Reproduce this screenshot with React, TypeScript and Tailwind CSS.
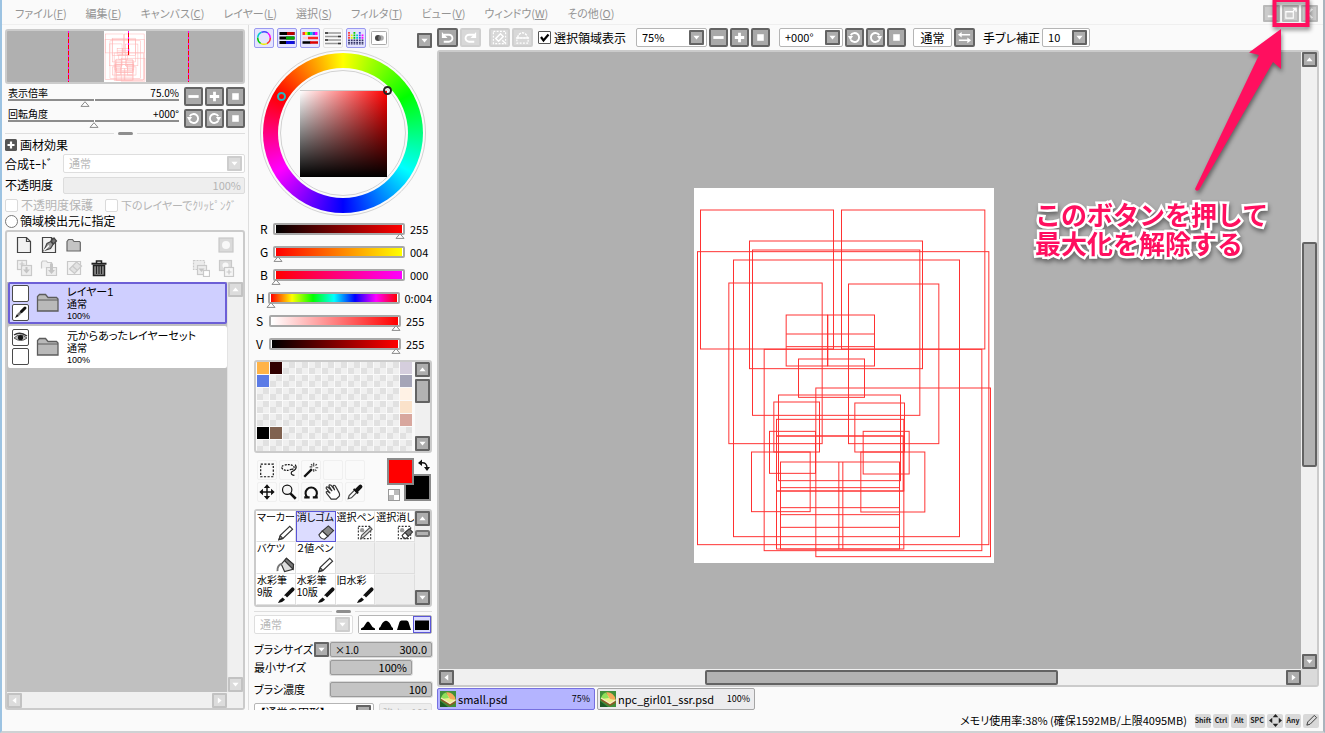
import React, { useState } from "react";
import type { ReactNode } from "react";

type Dir = "up" | "down" | "left" | "right";

const arrowPoints: Record<Dir, string> = {
  up: "3.5,10.5 8,5 12.5,10.5",
  down: "3.5,5.5 8,11 12.5,5.5",
  left: "10.5,3.5 5,8 10.5,12.5",
  right: "5.5,3.5 11,8 5.5,12.5",
};

function Arrow({ dir }: { dir: Dir }) {
  return (
    <svg viewBox="0 0 16 16" className="size-full" aria-hidden="true">
      <polygon points={arrowPoints[dir]} fill="#fff" />
    </svg>
  );
}

function ArrowButton({ dir, label, faded }: { dir: Dir; label: string; faded?: boolean }) {
  return (
    <button
      type="button"
      aria-label={label}
      className={
        faded
          ? "size-[15px] shrink-0 rounded-[1px] border-2 border-[#c2c2c2] bg-[#dcdcdc]"
          : "size-[15px] shrink-0 rounded-[1px] border-2 border-[#636363] bg-[#adadad]"
      }
    >
      <Arrow dir={dir} />
    </button>
  );
}

function Glyph({ name }: { name: string }) {
  return (
    <svg viewBox="0 0 16 16" className="size-[15px]" fill="none" stroke="#fff" strokeWidth="2" aria-hidden="true">
      {name === "minus" && <path d="M2.500 8h11" strokeWidth="3" />}
      {name === "plus" && <path d="M3 8h10M8 3v10" strokeWidth="3" />}
      {name === "square" && <rect x="4.500" y="4.500" width="7" height="7" fill="#fff" stroke="none" />}
      {name === "ccw" && (
        <>
          <path d="M4 10.500a4.800 4.800 0 1 0 0-5" />
          <path d="M1 6.500h5.500L3.500 11z" fill="#fff" stroke="none" />
        </>
      )}
      {name === "cw" && (
        <>
          <path d="M12 10.500a4.800 4.800 0 1 1 0-5" />
          <path d="M15 6.500H9.500l3 4.500z" fill="#fff" stroke="none" />
        </>
      )}
      {name === "undo" && (
        <>
          <path d="M4 5h5.500a3.500 3.500 0 0 1 0 7.500H4" />
          <path d="M2 2v6.500h6z" fill="#fff" stroke="none" />
        </>
      )}
      {name === "redo" && (
        <>
          <path d="M12 5H6.500a3.500 3.500 0 0 0 0 7.500H12" />
          <path d="M14 2v6.500H8z" fill="#fff" stroke="none" />
        </>
      )}
      {name === "deselect" && (
        <>
          <rect x="1.500" y="1.500" width="13" height="13" strokeDasharray="2 1.500" strokeWidth="1.200" />
          <path d="M4 9l5-5 3 3-5 5z" strokeWidth="1.500" />
          <path d="M11 11l3 3" strokeWidth="1.500" />
        </>
      )}
      {name === "invert" && (
        <>
          <path d="M2 8.500h12V14H2z" strokeWidth="1.200" strokeDasharray="2 1.500" />
          <path d="M3 8a5 5 0 0 1 10 0" strokeWidth="1.500" strokeDasharray="2.500 1" />
          <path d="M1 8.500h14" strokeWidth="1.500" />
        </>
      )}
      {name === "swap" && (
        <>
          <path d="M3 5h11M2 11h11" strokeWidth="1.600" />
          <path d="M1 5l4-3v6zM15 11l-4-3v6z" fill="#fff" stroke="none" />
        </>
      )}
    </svg>
  );
}

function ToolButton({ name, label, faded, wide }: { name: string; label: string; faded?: boolean; wide?: boolean }) {
  return (
    <button
      type="button"
      aria-label={label}
      className={`flex h-[19px] shrink-0 items-center justify-center rounded-[2px] border-2 ${wide ? "w-[21px]" : "w-[19px]"} ${
        faded ? "border-[#cfcfcf] bg-[#d8d8d8]" : "border-[#646464] bg-[#a9a9a9]"
      }`}
    >
      <Glyph name={name} />
    </button>
  );
}

function DropDown({ label, value, width, faded }: { label: string; value: string; width: string; faded?: boolean }) {
  return (
    <span
      className={`relative flex h-[19px] items-center rounded-[2px] border bg-white pr-[2px] ${width} ${
        faded ? "border-[#dedede]" : "border-[#b5b5b5]"
      }`}
    >
      <select
        aria-label={label}
        defaultValue={value}
        disabled={faded}
        className={`h-full min-w-0 flex-1 appearance-none bg-transparent pl-[5px] text-[11px] leading-[17px] opacity-100 outline-none ${
          faded ? "text-[#b8b8b8]" : "text-black"
        }`}
      >
        <option>{value}</option>
      </select>
      <span
        className={`pointer-events-none size-[15px] shrink-0 rounded-[1px] border-2 ${
          faded ? "border-[#cdcdcd] bg-[#dcdcdc]" : "border-[#636363] bg-[#adadad]"
        }`}
      >
        <Arrow dir="down" />
      </span>
    </span>
  );
}

function Grip() {
  return (
    <div className="flex h-2 shrink-0 items-center gap-1">
      <span className="h-px flex-1 bg-[#dedede]" />
      <span className="h-[3px] w-[15px] rounded bg-[#8e8e8e]" />
      <span className="h-px flex-1 bg-[#dedede]" />
    </div>
  );
}

function Triangle({ at }: { at: number }) {
  return (
    <span className="pointer-events-none absolute top-full -ml-[5px] block h-[6px] w-[10px]" style={{ left: `${at}%` }}>
      <svg viewBox="0 0 10 6" className="block size-full" aria-hidden="true">
        <path d="M5 .7L9 5.400H1z" fill="#fff" stroke="#8a8a8a" />
      </svg>
    </span>
  );
}

const menus: [string, string][] = [
  ["ファイル", "F"],
  ["編集", "E"],
  ["キャンバス", "C"],
  ["レイヤー", "L"],
  ["選択", "S"],
  ["フィルタ", "T"],
  ["ビュー", "V"],
  ["ウィンドウ", "W"],
  ["その他", "O"],
];

function WindowButton({ label, children }: { label: string; children: ReactNode }) {
  return (
    <button type="button" aria-label={label} className="size-[17px] rounded-[1px] border-2 border-[#b9b9b9] bg-[#cbcbcb]">
      <svg viewBox="0 0 14 14" className="size-full" fill="none" stroke="#fff" strokeWidth="2" aria-hidden="true">
        {children}
      </svg>
    </button>
  );
}

function Header() {
  return (
    <header className="flex h-[25px] shrink-0 items-center border-b border-[#efefef] pt-[2px] pr-[5px] pl-[13px]">
      <nav className="flex flex-1 gap-[19px] text-[11px] text-[#949494]">
        {menus.map(([name, key]) => (
          <button type="button" key={name} className="whitespace-nowrap">
            {name}(<span className="underline">{key}</span>)
          </button>
        ))}
      </nav>
      <div className="flex gap-[2px]">
        <WindowButton label="最小化">
          <path d="M3 10h6" />
        </WindowButton>
        <WindowButton label="元に戻す">
          <path d="M2 5h8v7H2z" strokeWidth="1.200" />
          <path d="M2 5h8M10 4l3-3M9.500 1.500H13V5" strokeWidth="1.500" />
        </WindowButton>
        <WindowButton label="閉じる">
          <path d="M10 2L5 7l5 5" />
        </WindowButton>
      </div>
    </header>
  );
}

/* Guide boxes of the open drawing: x1, y1, x2, y2 on a 930 x 1155 sheet. */
const boxes: number[][] = [
  [31, 75, 430, 492], [454, 75, 884, 492], [22, 200, 896, 1079], [178, 168, 697, 551],
  [187, 195, 689, 691], [130, 225, 808, 1055], [116, 294, 396, 776], [475, 297, 746, 776],
  [288, 390, 412, 543], [413, 390, 553, 543], [325, 522, 523, 637], [222, 493, 875, 1097],
  [377, 609, 901, 1115], [265, 630, 631, 887], [251, 651, 388, 801], [494, 654, 643, 801],
  [259, 703, 641, 918], [259, 753, 639, 918], [259, 753, 641, 1092], [238, 739, 376, 865],
  [519, 739, 657, 867], [184, 801, 360, 980], [512, 801, 704, 981], [271, 831, 628, 1092],
];
const rules = "M288 447H553M288 485H553M446 831V1092M458 831V1092M271 908H628M271 968H628M271 989H628M271 1027H628";

function Drawing({ stroke }: { stroke: string }) {
  return (
    <svg viewBox="11.5 9 900 1125" className="block size-full" fill="none" stroke="#ff0000" aria-hidden="true">
      <g className={stroke}>
        {boxes.map(([x1, y1, x2, y2], i) => (
          <rect key={i} x={x1} y={y1} width={x2 - x1} height={y2 - y1} />
        ))}
        <path d={rules} />
      </g>
    </svg>
  );
}

function NavSlider({ label, value, at }: { label: string; value: string; at: number }) {
  return (
    <label className="block h-[21px]">
      <span className="flex h-[12px] items-center justify-between text-[10px] leading-[12px]">
        <span>{label}</span>
        <span>{value}</span>
      </span>
      <span className="relative block h-[2px] bg-[#8d8d8d]">
        <span className="absolute left-1/2 h-[2px] w-px bg-white" />
        <Triangle at={at} />
        <input type="range" defaultValue={at} aria-label={label} className="absolute inset-0 h-[8px] w-full opacity-0" />
      </span>
    </label>
  );
}

function LayerIcon({ name }: { name: string }) {
  const faded = name.startsWith("f-");
  return (
    <svg viewBox="0 0 18 18" className="size-[18px]" fill="none" stroke={faded ? "#c9c9c9" : "#444"} strokeWidth="1.200" aria-hidden="true">
      {(name === "new" || name === "vector") && (
        <path d="M2.500 1.500h9l4 4v11h-13zM11.500 1.500v4h4" fill="#f2f2f2" />
      )}
      {name === "vector" && (
        <>
          <path d="M4 14.500l3-7 4-2 2 3-2.500 4z" fill="#9a9a9a" />
          <path d="M11 5l3-3 2.500 3-3 3z" fill="#777" />
          <path d="M4 14.500l5-5" stroke="#fff" />
        </>
      )}
      {name === "folder" && <path d="M2 5.500l1.500-2h4l1.500 2h5.500l.8 1V15H2z" fill="#c4c4c4" stroke="#666" />}
      {name === "trash" && (
        <>
          <path d="M3.500 6.500h11v10h-11z" fill="#8c8c8c" stroke="#222" strokeWidth="1.500" />
          <path d="M1.500 4.700h15" stroke="#222" strokeWidth="2" />
          <path d="M6.500 4V2h5v2" stroke="#222" strokeWidth="1.500" />
          <path d="M6.500 7v8M9 7v8M11.500 7v8" stroke="#222" />
        </>
      )}
      {name === "f-down" && (
        <>
          <rect x="2.500" y="1.500" width="9" height="9" fill="#f1f1f1" />
          <rect x="6.500" y="6.500" width="10" height="10" fill="#ededed" />
          <path d="M4.500 5h5M7 2.500v5" />
          <path d="M8 10.500h7l-3.500 4zM10.500 8h2v3h-2z" fill="#c4c4c4" stroke="none" />
        </>
      )}
      {name === "f-merge" && (
        <>
          <path d="M1.500 9.500v-6l1-1.500h4l1 1.500h4v5" fill="#f1f1f1" />
          <path d="M6.500 8.500h10v8h-10z" fill="#ededed" />
          <path d="M8 11h7l-3.500 4zM10 4.500h3V11h-3z" fill="#c4c4c4" stroke="none" />
        </>
      )}
      {name === "f-clear" && (
        <>
          <path d="M2.500 2.500h13v13h-13z" fill="#f3f3f3" />
          <path d="M4.500 10l7-7 5 4-7 7.500z" fill="#e2e2e2" />
          <path d="M7.500 7l5 4.500" />
        </>
      )}
      {name === "f-mask" && (
        <>
          <rect x="2" y="2" width="14" height="14" fill="#dadada" />
          <circle cx="9" cy="9" r="4" fill="#f8f8f8" stroke="none" />
        </>
      )}
      {name === "f-apply" && (
        <>
          <rect x="1.500" y="1.500" width="11" height="9" strokeDasharray="2 1" fill="#ececec" />
          <rect x="5.500" y="6.500" width="9" height="9" fill="#ececec" />
          <path d="M6.500 9.500h6l-3 3.500z" fill="#c4c4c4" stroke="none" />
          <rect x="11.500" y="11.500" width="6" height="6" fill="#fff" />
        </>
      )}
      {name === "f-newmask" && (
        <>
          <rect x="2.500" y="1.500" width="12" height="10" fill="#dcdcdc" />
          <circle cx="8.500" cy="6.500" r="3" fill="#f8f8f8" stroke="none" />
          <rect x="7.500" y="8.500" width="9" height="9" fill="#f6f6f6" />
          <path d="M12 10.500v5M9.500 13h5" />
        </>
      )}
    </svg>
  );
}

function LayerRow({ name, selected, eye, pen }: { name: string; selected?: boolean; eye?: boolean; pen?: boolean }) {
  return (
    <li
      className={`flex h-[42px] items-center rounded-[2px] border-2 pl-[2px] ${
        selected ? "border-[#6c5fd6] bg-[#cfcfff]" : "border-white bg-white"
      }`}
    >
      <span className="flex flex-col gap-[2px]">
        <button type="button" aria-label={`${name} 表示`} className="size-[17px] rounded-[2px] border border-[#4a4a4a] bg-white">
          {eye && (
            <svg viewBox="0 0 15 15" className="size-full" aria-hidden="true">
              <path d="M1 8q6-6 13 0q-6 5-13 0z" fill="#bbb" stroke="#555" />
              <circle cx="7.500" cy="7.500" r="2.600" fill="#111" />
              <path d="M1 5q6-4 13 1" stroke="#333" strokeWidth="1.500" fill="none" />
            </svg>
          )}
        </button>
        <button type="button" aria-label={`${name} 編集`} className="size-[17px] rounded-[2px] border border-[#4a4a4a] bg-white">
          {pen && (
            <svg viewBox="0 0 15 15" className="size-full" aria-hidden="true">
              <path d="M2 13l2-4 2 2z" fill="#111" />
              <path d="M5 10l3-3" stroke="#777" strokeWidth="2.500" />
              <path d="M8.500 6.500L12 3" stroke="#111" strokeWidth="3" strokeLinecap="round" />
            </svg>
          )}
        </button>
      </span>
      <svg viewBox="0 0 24 20" className="mx-[7px] h-5 w-6 shrink-0" aria-hidden="true">
        <path d="M1.500 18V3.500l2-2h6l2.500 3h8.500l1.500 1.500V18z" fill="#b9b9b9" stroke="#5c5c5c" strokeWidth="1.300" />
        <path d="M2 7h20" stroke="#5c5c5c" />
      </svg>
      <span className="flex flex-col pt-[2px] font-['Liberation_Sans','Noto_Sans_CJK_JP',sans-serif] whitespace-nowrap">
        <span className="text-[11px] leading-[13px]">{name}</span>
        <span className="text-[10px] leading-[12px]">通常</span>
        <span className="text-[9px] leading-[11px]">100%</span>
      </span>
    </li>
  );
}

function GuideLine({ place }: { place: string }) {
  return <span className={`w-px bg-[repeating-linear-gradient(#ff00ff_0_2px,#ff0000_2px_6px)] ${place}`} />;
}

function LeftPanel() {
  return (
    <aside className="flex w-[247px] shrink-0 flex-col border-r border-[#dedede] px-[3px] pt-1">
      <div className="flex h-[55px] shrink-0 items-stretch justify-center rounded-[3px] border-2 border-[#cbcbcb] bg-[#b0b0b0]">
        <div className="flex flex-1 justify-end">
          <GuideLine place="mr-[35px]" />
        </div>
        <div className="relative w-[42px] bg-white">
          <div className="h-full opacity-30">
            <Drawing stroke="[stroke-width:11]" />
          </div>
          <GuideLine place="absolute top-0 left-6 h-6" />
        </div>
        <div className="flex flex-1 justify-start">
          <GuideLine place="ml-[42px]" />
        </div>
      </div>

      <div className="flex gap-[5px] pt-[3px] pl-[3px]">
        <div className="flex-1">
          <NavSlider label="表示倍率" value="75.0%" at={45} />
          <NavSlider label="回転角度" value="+000°" at={50} />
        </div>
        <div className="grid grid-cols-3 gap-[2px]">
          <ToolButton name="minus" label="縮小" />
          <ToolButton name="plus" label="拡大" />
          <ToolButton name="square" label="表示倍率をリセット" />
          <ToolButton name="ccw" label="左回転" />
          <ToolButton name="cw" label="右回転" />
          <ToolButton name="square" label="回転角度をリセット" />
        </div>
      </div>
      <Grip />

      <div className="flex flex-col gap-[2px] text-[12px] leading-4">
        <button type="button" className="flex h-[15px] items-center gap-[3px]">
          <svg viewBox="0 0 12 12" className="size-3" aria-hidden="true">
            <rect width="12" height="12" rx="1.500" fill="#555" />
            <path d="M2.500 6h7M6 2.500v7" stroke="#fff" strokeWidth="2.200" />
          </svg>
          画材効果
        </button>
        <div className="flex h-[19px] items-center">
          <span className="w-[58px]">合成ﾓｰﾄﾞ</span>
          <DropDown label="合成モード" value="通常" width="flex-1" faded />
        </div>
        <label className="flex h-[20px] items-center">
          <span className="w-[58px]">不透明度</span>
          <input
            readOnly
            value="100%"
            className="h-[17px] min-w-0 flex-1 rounded-[2px] border border-[#dcdcdc] bg-[#eeeeee] pr-[3px] text-right text-[11px] text-[#b5b5b5]"
          />
        </label>
        <div className="flex h-[16px] items-center gap-3 whitespace-nowrap text-[#b5b5b5]">
          <label className="flex items-center gap-[3px]">
            <input type="checkbox" disabled className="size-[13px] appearance-none rounded-[2px] border border-[#dadada] bg-white" />
            不透明度保護
          </label>
          <label className="flex items-center gap-[3px] text-[11px]">
            <input type="checkbox" disabled className="size-[13px] appearance-none rounded-[2px] border border-[#dadada] bg-white" />
            下のレイヤーでｸﾘｯﾋﾟﾝｸﾞ
          </label>
        </div>
        <label className="-mt-[2px] flex h-[16px] items-center gap-[2px]">
          <input type="radio" className="size-[13px] appearance-none rounded-full border border-[#777] bg-white" />
          領域検出元に指定
        </label>
      </div>

      <section aria-label="レイヤー" className="mt-[1px] flex min-h-0 flex-1 flex-col rounded-[3px] border-2 border-[#cbcbcb]">
        <div className="flex flex-col gap-[5px] px-[8px] pt-[4px] pb-[5px]">
          <div className="flex gap-[7px]">
            {[["new", "新規レイヤー"], ["vector", "新規ペン入れレイヤー"], ["folder", "新規レイヤーセット"]].map(([n, l]) => (
              <button type="button" key={n} aria-label={l}><LayerIcon name={n} /></button>
            ))}
            <button type="button" aria-label="レイヤーマスク" className="ml-auto"><LayerIcon name="f-mask" /></button>
          </div>
          <div className="flex gap-[7px]">
            {[["f-down", "下のレイヤーに転写"], ["f-merge", "下のレイヤーと結合"], ["f-clear", "レイヤーをクリア"], ["trash", "レイヤーの削除"]].map(([n, l]) => (
              <button type="button" key={n} aria-label={l}><LayerIcon name={n} /></button>
            ))}
            <button type="button" aria-label="マスクを適用" className="ml-auto"><LayerIcon name="f-apply" /></button>
            <button type="button" aria-label="マスクを作成"><LayerIcon name="f-newmask" /></button>
          </div>
        </div>
        <div className="flex min-h-0 flex-1 bg-[#c0c0c0] pl-px">
          <ul className="flex flex-1 flex-col gap-[2px]">
            <LayerRow name="レイヤー1" selected pen />
            <LayerRow name="元からあったレイヤーセット" eye />
          </ul>
          <div className="flex w-[16px] flex-col items-end justify-between border-l border-[#e3e3e3] bg-[#f0f0f0]">
            <ArrowButton dir="up" label="上へスクロール" faded />
            <ArrowButton dir="down" label="下へスクロール" faded />
          </div>
        </div>
        <div className="flex h-[16px] items-center justify-between bg-[#f0f0f0] pr-[16px]">
          <ArrowButton dir="left" label="左へスクロール" faded />
          <ArrowButton dir="right" label="右へスクロール" faded />
        </div>
      </section>
    </aside>
  );
}

function ModeIcon({ name }: { name: string }) {
  const hues = ["#f33", "#ee0", "#0c0", "#0cc", "#44f", "#f0f"];
  return (
    <svg viewBox="0 0 18 18" className="size-full" fill="none" aria-hidden="true">
      {name === "wheel" &&
        hues.map((c, i) => (
          <circle key={c} cx="9" cy="9" r="6.300" stroke={c} strokeWidth="1.500" strokeDasharray="6.600 33" strokeDashoffset={-i * 6.600} />
        ))}
      {name === "rgb" && (
        <>
          <path d="M1.500 4.500h15M1.500 9h15M1.500 13.500h15" stroke="#000" strokeWidth="3" />
          <path d="M9 4.500h7.500" stroke="#b00" strokeWidth="3" />
          <path d="M8 9h8.500" stroke="#0a0" strokeWidth="3" />
          <path d="M8 13.500h8.500" stroke="#11d" strokeWidth="3" />
        </>
      )}
      {name === "hsv" && (
        <>
          {hues.map((c, i) => (
            <rect key={c} x={1.500 + i * 2.500} y="3" width="2.500" height="3" fill={c} />
          ))}
          <path d="M2 9h5" stroke="#fcc" strokeWidth="2.500" />
          <path d="M7 9h10" stroke="#f22" strokeWidth="2.500" />
          <path d="M1.500 13.500h8" stroke="#000" strokeWidth="2.500" />
          <path d="M9 13.500h8" stroke="#d00" strokeWidth="2.500" />
        </>
      )}
      {name === "mixer" && (
        <>
          <path d="M1 4h16M1 7.500h16M1 11h16M1 14.500h16" stroke="#999" strokeWidth="1.500" />
          <path d="M1 4h3M1 11h3M14 7.500h3M14 14.500h3" stroke="#333" strokeWidth="1.500" />
        </>
      )}
      {name === "swatch" &&
        hues.map((c, i) => (
          <g key={c} stroke={c} strokeWidth="1.800" strokeDasharray="1.800 .7">
            <path d={`M${2 + i * 2.700} ${3 + (i % 2) * 2.500}V10.500`} />
            <path d={`M${2 + i * 2.700} 10.500V16`} stroke="#336" />
          </g>
        ))}
      {name === "pad" && (
        <>
          <rect x="1.500" y="2.500" width="15" height="13" rx="1" stroke="#aaa" fill="#fff" />
          <circle cx="8" cy="9" r="3" fill="#444" />
          <circle cx="11" cy="9" r="2.800" fill="#888" opacity=".7" />
        </>
      )}
    </svg>
  );
}

const modes: [string, string, boolean][] = [
  ["wheel", "カラーサークル", true],
  ["rgb", "RGBスライダ", true],
  ["hsv", "HSVスライダ", true],
  ["mixer", "中間色バー", false],
  ["swatch", "スウォッチ", true],
  ["pad", "スクラッチパッド", false],
];

function ColorSlider({ label, value, at, bar, shift }: { label: string; value: string; at: number; bar: string; shift?: boolean }) {
  return (
    <label className={`flex h-[23px] items-center ${shift ? "pl-[2px]" : "pl-[6px]"}`}>
      <span className="w-[13px] text-[12px] leading-4">{label}</span>
      <span className="relative block h-[12px] w-[132px] shrink-0 rounded-[2px] border-2 border-[#a8a8a8]">
        <span className={`block h-full border-x border-white ${bar}`} />
        <Triangle at={at} />
        <input type="range" defaultValue={at} aria-label={label} className="absolute inset-0 w-full opacity-0" />
      </span>
      <span className="pl-[5px] text-[11px] leading-4">{value}</span>
    </label>
  );
}

const swatches: Record<number, string> = {
  0: "bg-[#ffb347]",
  1: "bg-[#300000]",
  11: "bg-[#d5cedd]",
  12: "bg-[#5b7be6]",
  23: "bg-[#a5a5b7]",
  35: "bg-[#fff2e5]",
  47: "bg-[#fae2ca]",
  59: "bg-[#d8a79e]",
  60: "bg-[#000000]",
  61: "bg-[#806250]",
};

function ToolIcon({ name }: { name: string }) {
  return (
    <svg viewBox="0 0 20 20" className="size-full" fill="none" stroke="#111" strokeWidth="1.300" aria-hidden="true">
      {name === "select" && <rect x="3" y="3.500" width="14" height="14" strokeDasharray="2.400 1.600" />}
      {name === "lasso" && (
        <>
          <path d="M13 9q-6 3-10 0q-3-3 2-4.500q6-1.500 10 1q2 3-2 4" strokeDasharray="2.200 1.200" />
          <path d="M17 4q3 5-4 8q-2 3 3 4" />
        </>
      )}
      {name === "wand" && (
        <>
          <path d="M2.500 17.500L11 9" strokeWidth="2.600" />
          <path d="M13 2v4M13 9v3M8.500 6.500h3M15 7.500h3M10 3.500l1.500 1.500M16.500 3.500L15 5M16 11l-1.500-1.500" stroke="#444" />
        </>
      )}
      {name === "move" && (
        <>
          <path d="M10 4v12M4 10h12" strokeWidth="1.600" />
          <path d="M10 1.500l3.500 4h-7zM10 18.500l3.500-4h-7zM1.500 10l4-3.500v7zM18.500 10l-4-3.500v7z" fill="#111" stroke="none" />
        </>
      )}
      {name === "zoom" && (
        <>
          <circle cx="8" cy="7.500" r="5.200" fill="#f4f4f4" />
          <path d="M11.500 11.500L17.500 17.500" strokeWidth="2.800" />
        </>
      )}
      {name === "rotate" && (
        <>
          <path d="M6 16a6.300 6.300 0 1 1 8.500 0" strokeWidth="2.300" />
          <path d="M2.500 16h6M12 16h5.500" strokeWidth="2.300" />
        </>
      )}
      {name === "hand" && (
        <path
          d="M8 18L3 11.500q-1.500-2.500 1-2l3 2L2.500 6q-.5-2.500 2-1.300L9 9 5.500 3.500q.2-2.300 2.300-1L12 8 10 3.500q1-1.800 2.500-.3l3 5.300q2.500 3.500 1.500 6l-3.500 3.500z"
          fill="#fff"
          stroke="#333"
        />
      )}
      {name === "picker" && (
        <>
          <path d="M2.500 17.500l1-3.500 6-6 2.500 2.500-6 6z" fill="#fff" stroke="#444" />
          <path d="M8.500 6.500l5 5" strokeWidth="2" />
          <path d="M12 8l4-4" strokeWidth="4.500" strokeLinecap="round" />
        </>
      )}
    </svg>
  );
}

const tools: [string, string][] = [
  ["select", "選択範囲"], ["lasso", "投げ縄"], ["wand", "自動選択"], ["none1", "空き1"], ["none2", "空き2"],
  ["move", "移動"], ["zoom", "ズーム"], ["rotate", "回転"], ["hand", "ハンド"], ["picker", "スポイト"],
];

function BrushIcon({ name }: { name: string }) {
  return (
    <svg viewBox="0 0 20 18" className="absolute right-0 bottom-0 h-[17px] w-[19px]" fill="none" stroke="#333" strokeWidth="1.200" aria-hidden="true">
      {name.startsWith("sel") && (
        <>
          <rect x="3.500" y="2.500" width="13" height="13" strokeDasharray="2 1.500" />
          <circle cx="7.500" cy="6.500" r="2.300" fill="#999" stroke="none" />
        </>
      )}
      {name === "pen" && (
        <>
          <path d="M3 16.500l1.500-4.500L14.500 2.500l3 3L7 15.500z" fill="#fff" />
          <path d="M3 16.500l1.500-4 2.500 2.500z" fill="#aaa" />
        </>
      )}
      {name === "selpen" && <path d="M6 15.500l1-3.500 9-8.500 2 2L9 14z" fill="#ddd" stroke="#555" />}
      {name === "eraser" && (
        <>
          <path d="M6.500 7.500L13 2l5.500 5-6 6z" fill="#888" />
          <path d="M6.500 7.500l6 5.500-3.500 3q-4 0-6-4.500z" fill="#fff" />
        </>
      )}
      {name === "seleraser" && (
        <>
          <path d="M10.500 9L15 5l3.500 3.500-4.500 4.500z" fill="#777" />
          <path d="M10.500 9l3.500 4-2.500 2.500q-3 0-4-3.500z" fill="#fff" />
        </>
      )}
      {name === "bucket" && (
        <>
          <path d="M5.500 8.500L11 2.500l7.500 6.500-.5 5-9 2.500z" fill="#ddd" />
          <path d="M11 2.500l7.500 6.500-.5 5-9-9z" fill="#777" />
          <path d="M6 8q-5 2-4.500 8" stroke="#777" strokeWidth="2" />
        </>
      )}
      {name === "brush" && (
        <>
          <path d="M10.500 9.500L17.500 2.500" stroke="#111" strokeWidth="4" strokeLinecap="round" />
          <path d="M8.500 12l2-2" stroke="#fff" strokeWidth="3.500" />
          <path d="M2 17q1.500-4 5-6l2.500 2.500q-2.500 3-7.500 3.500z" fill="#111" stroke="none" />
        </>
      )}
    </svg>
  );
}

const brushes: [string, string, string][] = [
  ["マーカー", "", "pen"], ["消しゴム", "", "eraser"], ["選択ペン", "", "selpen"], ["選択消し", "", "seleraser"],
  ["バケツ", "", "bucket"], ["２値ペン", "", "pen"], ["", "", ""], ["", "", ""],
  ["水彩筆", "9版", "brush"], ["水彩筆", "10版", "brush"], ["旧水彩", "", "brush"], ["", "", ""],
];

const shapes = [
  "M0 12v-1.500q3-1 4.500-4.500q2.500-5 5 0q1.500 3.500 4.500 4.500V12z",
  "M0 12v-2q1.500-.5 2.500-3.500q4.500-7.500 9 0q1 3 2.500 3.500v2z",
  "M0 12L2.500 4q.5-1.500 2-1.500h5q1.500 0 2 1.500L14 12z",
  "M0 2.500h14V12H0z",
];

function MiddlePanel() {
  const [brush, setBrush] = useState(1);
  return (
    <aside className="flex w-[188px] shrink-0 flex-col overflow-hidden px-[5px] pt-[3px]">
      <div className="flex h-[20px] shrink-0 items-end">
        <div className="flex h-full flex-1 gap-[3px]">
          {modes.map(([name, label, on]) => (
            <button
              type="button"
              key={name}
              aria-label={label}
              className={`size-[20px] rounded-[2px] border ${on ? "border-[#9a9af0] bg-[#e4e4ff]" : "border-[#e4e4e4] bg-[#fafafa]"}`}
            >
              <ModeIcon name={name} />
            </button>
          ))}
        </div>
        <ArrowButton dir="down" label="カラーメニュー" />
      </div>

      <div className="mt-[2px] mb-px flex size-[166px] shrink-0 items-center justify-center self-center rounded-full border border-[#d2d2d2]">
        <div className="relative flex size-[160px] items-center justify-center rounded-full bg-[conic-gradient(#ff0,#0f0,#0ff,#00f,#f0f,#f00,#ff0)]">
          <div className="flex size-[130px] items-center justify-center rounded-full bg-[#fafafa]">
            <div className="flex size-[126px] items-center justify-center rounded-full border border-[#d2d2d2]">
              <div className="relative size-[87px] border-t border-[#ccc] bg-[linear-gradient(to_top,#000,transparent),linear-gradient(to_right,#fff,#f00)]">
                <span className="absolute -top-[5px] -right-[5px] size-[9px] rounded-full border-2 border-[#222]" />
              </div>
            </div>
          </div>
          <span className="absolute top-[39px] left-[14px] size-[9px] rounded-full border-2 border-[#2bb5bd]" />
        </div>
      </div>

      <div className="flex shrink-0 flex-col">
        <ColorSlider label="R" value="255" at={98} bar="bg-linear-to-r/srgb from-black to-[#f00]" />
        <ColorSlider label="G" value="004" at={2} bar="bg-linear-to-r/srgb from-[#f00] to-[#ff0]" />
        <ColorSlider label="B" value="000" at={1} bar="bg-linear-to-r/srgb from-[#f00] to-[#f0f]" />
        <ColorSlider label="H" value="0:004" at={1} bar="bg-[linear-gradient(to_right,#f00,#ff0,#0f0,#0ff,#00f,#f0f,#f00)]" shift />
        <ColorSlider label="S" value="255" at={98} bar="bg-linear-to-r/srgb from-white to-[#f00]" shift />
        <ColorSlider label="V" value="255" at={98} bar="bg-linear-to-r/srgb from-black to-[#f00]" shift />
      </div>

      <div className="mt-[5px] flex h-[93px] shrink-0 justify-between overflow-hidden rounded-[3px] border-2 border-[#cbcbcb]">
        <div className="grid auto-rows-[12px] grid-cols-[repeat(12,12px)] gap-px overflow-hidden pl-px">
          {Array.from({ length: 84 }, (_, i) => (
            <span
              key={i}
              className={swatches[i] ?? "bg-[conic-gradient(#e1e1e1_25%,#f0f0f0_0_50%,#e1e1e1_0_75%,#f0f0f0_0)]"}
            />
          ))}
        </div>
        <div className="flex flex-col bg-[#f0f0f0]">
          <ArrowButton dir="up" label="パレットを上へ" />
          <span className="mt-[2px] h-6 rounded-[1px] border-2 border-[#636363] bg-[#b2b2b2]" />
          <span className="flex-1" />
          <ArrowButton dir="down" label="パレットを下へ" />
        </div>
      </div>

      <div className="mt-1 flex h-[48px] shrink-0 justify-between pl-[3px]">
        <div className="grid grid-cols-[repeat(5,20px)] gap-[2px] self-center">
          {tools.map(([name, label]) => (
            <button type="button" key={name} aria-label={label} className="size-5 rounded-[2px] border border-[#f0f0f0]">
              <ToolIcon name={name} />
            </button>
          ))}
        </div>
        <div className="relative w-[45px]">
          <span className="absolute top-[17px] left-[17px] size-[27px] border-2 border-[#8a8a8a] bg-black" />
          <span className="absolute top-[1px] left-0 size-[27px] border-2 border-[#8a8a8a] bg-[#ff0000]" />
          <svg viewBox="0 0 12 12" className="absolute top-[2px] left-[31px] size-3" aria-hidden="true">
            <path d="M3 4q6-1 6 5" fill="none" stroke="#111" strokeWidth="1.500" />
            <path d="M0 4l4-3.500V7zM9 12L6 8h6z" fill="#111" />
          </svg>
          <span className="absolute top-[32px] left-px size-3 border border-[#999] bg-[conic-gradient(#bbb_25%,#fff_0_50%,#bbb_0_75%,#fff_0)]" />
        </div>
      </div>

      <div className="mt-1 flex h-[98px] shrink-0 rounded-[3px] border-2 border-[#cbcbcb] bg-[#f0f0f0]">
        <div className="grid flex-1 grid-cols-4 grid-rows-3">
          {brushes.map(([a, b, icon], i) => (
            <button
              type="button"
              key={i}
              aria-label={a || "空きスロット"}
              onClick={() => setBrush(i)}
              className={`relative flex flex-col items-start overflow-hidden border text-left font-['Liberation_Sans','Noto_Sans_CJK_JP',sans-serif] text-[10px] leading-[12px] whitespace-nowrap ${
                i === brush ? "border-[#5a55d8] bg-[#dcdcff]" : a ? "border-t-white border-r-[#e0e0e0] border-b-[#e0e0e0] border-l-white bg-white" : "border-t-[#f0f0f0] border-r-[#dedede] border-b-[#dedede] border-l-[#f0f0f0] bg-[#eeeeee]"
              }`}
            >
              <span>{a}</span>
              {b && <span>{b}</span>}
              {icon && <BrushIcon name={icon} />}
            </button>
          ))}
        </div>
        <div className="flex flex-col">
          <ArrowButton dir="up" label="ブラシを上へ" />
          <span className="mt-1 h-[7px] rounded-[2px] border-2 border-[#757575] bg-[#b2b2b2]" />
          <span className="flex-1" />
          <ArrowButton dir="down" label="ブラシを下へ" />
        </div>
      </div>

      <Grip />

      <div className="flex shrink-0 gap-[5px]">
        <DropDown label="ブラシの合成モード" value="通常" width="w-[99px]" faded />
        <div className="flex h-[19px] flex-1 rounded-[2px] border border-[#b5b5b5] bg-white">
          {shapes.map((d, i) => (
            <button
              type="button"
              key={i}
              aria-label={`ブラシ形状 ${i + 1}`}
              className={`flex flex-1 items-center justify-center border ${i === 3 ? "border-[#5a55d8] bg-[#dcdcff]" : "border-white"}`}
            >
              <svg viewBox="0 0 14 14" className="size-[14px]" aria-hidden="true">
                <path d={d} fill="#000" />
              </svg>
            </button>
          ))}
        </div>
      </div>

      <div className="mt-[6px] flex shrink-0 flex-col text-[11px]">
        <div className="flex h-[18px] items-center">
          <label htmlFor="size" className="w-[60px] whitespace-nowrap">ブラシサイズ</label>
          <span className="flex w-[15px] justify-center">
            <ArrowButton dir="down" label="サイズ一覧" />
          </span>
          <div className="ml-px flex h-[15px] min-w-0 flex-1 items-center rounded-[2px] border border-[#9a9a9a] bg-[#c4c4c4] ring-1 ring-[#dadada]">
            <button type="button" className="pl-1 text-[10px]">×1.0</button>
            <input id="size" readOnly value="300.0" className="min-w-0 flex-1 bg-transparent pr-1 text-right text-[11px] leading-[13px]" />
          </div>
        </div>
        <label className="flex h-[18px] items-center">
          <span className="w-[76px] whitespace-nowrap">最小サイズ</span>
          <input readOnly value="100%" className="h-[15px] w-[82px] rounded-[2px] border border-[#9a9a9a] bg-[#c4c4c4] pr-1 text-right text-[11px] leading-[13px] ring-1 ring-[#dadada]" />
        </label>
        <label className="mt-1 flex h-[18px] items-center">
          <span className="w-[76px] whitespace-nowrap">ブラシ濃度</span>
          <input readOnly value="100" className="h-[15px] min-w-0 flex-1 rounded-[2px] border border-[#9a9a9a] bg-[#c4c4c4] pr-1 text-right text-[11px] leading-[13px] ring-1 ring-[#dadada]" />
        </label>
        <div className="mt-[5px] flex gap-[5px]">
          <DropDown label="ブラシの形" value="【通常の円形】" width="w-[120px]" />
          <label className="flex h-[19px] flex-1 items-center justify-between rounded-[2px] border border-[#dedede] bg-[#eeeeee] px-[3px] text-[10px] text-[#b8b8b8]">
            強さ
            <input readOnly value="100" className="w-6 bg-transparent text-right" />
          </label>
        </div>
      </div>
    </aside>
  );
}

function Toolbar() {
  return (
    <div className="flex h-[25px] shrink-0 items-center gap-[2px] whitespace-nowrap">
      <ToolButton name="undo" label="元に戻す" wide />
      <ToolButton name="redo" label="やり直す" faded wide />
      <span className="w-1" />
      <ToolButton name="deselect" label="選択解除" faded wide />
      <ToolButton name="invert" label="選択反転" faded wide />
      <label className="ml-[3px] flex items-center gap-[3px] text-[12px]">
        <span className="relative flex size-[13px]">
          <input type="checkbox" defaultChecked className="peer size-[13px] appearance-none rounded-[1px] border border-[#555] bg-white" />
          <svg viewBox="0 0 13 13" className="pointer-events-none absolute inset-0 hidden size-[13px] peer-checked:block" aria-hidden="true">
            <path d="M3 6l2.500 3.500L10.500 3.500" fill="none" stroke="#000" strokeWidth="2.200" />
          </svg>
        </span>
        選択領域表示
      </label>
      <span className="w-[6px]" />
      <DropDown label="表示倍率" value="75%" width="w-[71px]" />
      <ToolButton name="minus" label="縮小" />
      <ToolButton name="plus" label="拡大" />
      <ToolButton name="square" label="等倍" />
      <span className="w-[5px]" />
      <DropDown label="回転角度" value="+000°" width="w-[64px]" />
      <ToolButton name="ccw" label="左回転" />
      <ToolButton name="cw" label="右回転" />
      <ToolButton name="square" label="回転リセット" />
      <button type="button" className="ml-[5px] h-[19px] w-[39px] rounded-[2px] border border-[#b5b5b5] bg-white text-[12px] leading-4">
        通常
      </button>
      <ToolButton name="swap" label="左右反転" wide />
      <span className="ml-[6px] text-[12px]">手ブレ補正</span>
      <DropDown label="手ブレ補正" value="10" width="w-[48px]" />
    </div>
  );
}

function FileTab({ name, zoom, active }: { name: string; zoom: string; active?: boolean }) {
  return (
    <button
      type="button"
      className={`flex h-[22px] w-[158px] items-center gap-[2px] rounded-[2px] border px-[2px] pr-1 text-[11px] ${
        active ? "border-[#7670e0] bg-[#b4b4ff]" : "border-[#a5a5a5] bg-[#ececee]"
      }`}
    >
      <svg viewBox="0 0 16 16" className="size-4" aria-hidden="true">
        <rect width="16" height="16" fill="#3f8f3a" />
        <path d="M1 9A7.500 7.500 0 0 1 15.500 9L10 13 1 7z" fill="#e9f08a" />
        <path d="M6 1.500A8 8 0 0 1 15.500 9L10 8z" fill="#f4a95a" />
        <path d="M1 8A8 8 0 0 1 6 1.500L9 7z" fill="#8fe05a" />
        <path d="M1 7l9 5.500 5.500-3.500V12l-5.500 3L1 9.500z" fill="#8a5a26" />
        <path d="M1 7l9 5.500 5.500-3.500" fill="none" stroke="#f6efc5" strokeWidth="1.200" />
        <path d="M0 10l8 6H0z" fill="#1d5a24" />
      </svg>
      <span className="flex-1 text-left">{name}</span>
      <span className="text-[9px]">{zoom}</span>
    </button>
  );
}

function Workspace() {
  return (
    <main className="flex min-w-0 flex-1 flex-col pr-[4px]">
      <Toolbar />
      <div className="flex min-h-0 flex-1 flex-col rounded-[3px] border-2 border-[#cbcbcb]">
        <div className="flex min-h-0 flex-1">
          <div className="flex min-w-0 flex-1 items-center justify-center bg-[#b0b0b0] pt-[30px] pr-[52px]">
            <div className="h-[375px] w-[300px] bg-white">
              <Drawing stroke="[stroke-width:3] opacity-80" />
            </div>
          </div>
          <div className="flex w-[16px] flex-col items-center bg-[#f0f0f0]">
            <ArrowButton dir="up" label="上へ" />
            <span className="flex-[176]" />
            <span className="w-[15px] flex-[222] rounded-[2px] border-2 border-[#636363] bg-[#b2b2b2]" />
            <span className="flex-[188]" />
            <ArrowButton dir="down" label="下へ" />
          </div>
        </div>
        <div className="flex h-[16px] shrink-0 items-center bg-[#f0f0f0]">
          <ArrowButton dir="left" label="左へ" />
          <span className="flex-[252]" />
          <span className="h-[15px] flex-[351] rounded-[2px] border-2 border-[#636363] bg-[#b2b2b2]" />
          <span className="flex-[229]" />
          <ArrowButton dir="right" label="右へ" />
          <span className="h-full w-[16px] bg-[#dadada]" />
        </div>
      </div>
      <div className="flex shrink-0 gap-[2px] pt-px">
        <FileTab name="small.psd" zoom="75%" active />
        <FileTab name="npc_girl01_ssr.psd" zoom="100%" />
      </div>
    </main>
  );
}

function StatusBar() {
  const key = "flex h-[14px] w-[16px] items-center justify-center rounded-[2px] bg-[#d9d9d9] text-[7px] leading-none font-bold text-[#222]";
  return (
    <footer className="flex h-[21px] shrink-0 items-center justify-end gap-2 pr-[4px] text-[11px]">
      <span className="whitespace-nowrap">メモリ使用率:38% (確保1592MB/上限4095MB)</span>
      <div className="flex gap-[2px]">
        <span className={key}>Shift</span>
        <span className={key}>Ctrl</span>
        <span className={key}>Alt</span>
        <span className={key}>SPC</span>
        <span className={key}>
          <svg viewBox="0 0 14 14" className="size-[13px]" aria-hidden="true">
            <path d="M7 0l3 3.500H4zM7 14l3-3.500H4zM0 7l3.500-3v6zM14 7l-3.500-3v6z" fill="#222" />
          </svg>
        </span>
        <span className={key}>Any</span>
        <span className={key}>
          <svg viewBox="0 0 14 14" className="size-[13px]" fill="none" stroke="#333" aria-hidden="true">
            <path d="M2 12l1-3.500L10 1.500l2.500 2.500-7 7z" />
          </svg>
        </span>
      </div>
    </footer>
  );
}

function Callout() {
  return (
    <div className="pointer-events-none absolute top-0 right-[14px] w-[274px]">
      <svg viewBox="0 0 274 202" className="block w-full overflow-visible drop-shadow-[1px_3px_2px_rgba(0,0,0,0.45)]" aria-hidden="true">
        <rect x="239.500" y="0" width="33" height="25" fill="none" stroke="#ff0f5f" strokeWidth="4" />
        <path d="M246 29l-32 23.500 10 2.500L160 189q1 3 4 1L238 62l8 7z" fill="#ff0f5f" />
      </svg>
      <p className="flex flex-col font-['Liberation_Sans','Noto_Sans_CJK_JP',sans-serif] text-[26px] leading-[29px] font-bold whitespace-nowrap text-[#ff0f5f] drop-shadow-[1px_3px_2px_rgba(0,0,0,0.4)] [-webkit-text-stroke:5px_#fff] [font-feature-settings:normal] [paint-order:stroke_fill]">
        <span>このボタンを押して</span>
        <span>最大化を解除する</span>
      </p>
    </div>
  );
}

export default function App() {
  return (
    <div className="relative flex h-screen min-h-[700px] min-w-[1120px] flex-col overflow-hidden border-r-2 border-b-2 border-l-2 border-r-[#a9b4bd] border-b-[#cfd2d4] border-l-[#9cc3e2] bg-[#fafafa] font-['Noto_Sans_CJK_JP',sans-serif] text-black [font-feature-settings:'palt']">
      <Header />
      <div className="flex min-h-0 flex-1">
        <LeftPanel />
        <MiddlePanel />
        <Workspace />
      </div>
      <StatusBar />
      <Callout />
    </div>
  );
}
